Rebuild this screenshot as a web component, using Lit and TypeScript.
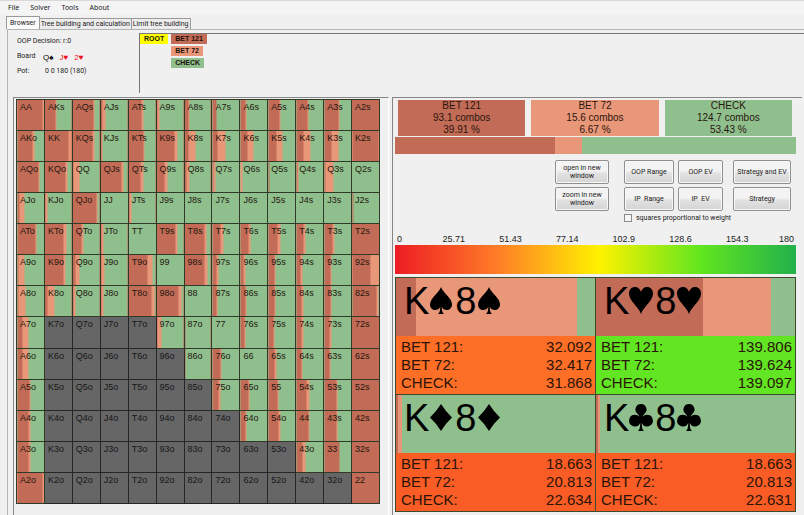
import { LitElement, html, css, svg } from "lit";
import { customElement, property, state } from "lit/decorators.js";
import { classMap } from "lit/directives/class-map.js";
import { styleMap } from "lit/directives/style-map.js";

const RANKS = "AKQJT98765432";

// One entry per hand, row by row: "a,b" gives the right edge of the BET 121
// and BET 72 bands in percent of the cell; "x" marks a hand out of range.
const STRATEGY = [
  "92,100 42,46 76,80 6,19 48,56 5,11 15,20 13,16 18,22 39,44 39,44 51,56 100,100",
  "57,64 90,100 75,83 3,8 54,61 66,76 16,43 20,50 27,50 30,53 27,51 26,53 95,100",
  "77,83 77,84 2,26 79,84 43,57 31,40 7,21 3,12 1,8 3,5 2,8 5,34 0,0",
  "8,26 2,10 88,93 0,0 3,12 0,0 0,0 0,0 0,0 0,0 0,0 0,0 5,5",
  "68,72 71,81 32,40 2,12 0,0 69,76 76,86 31,40 29,37 35,43 25,33 30,37 100,100",
  "2,27 69,79 12,26 3,14 71,90 0,0 76,87 13,21 12,17 24,27 15,23 21,26 66,100",
  "5,28 12,38 3,12 3,11 86,95 82,94 0,0 14,17 17,21 21,26 20,25 21,26 88,96",
  "20,40 x x x x 4,19 2,5 0,0 13,18 19,24 19,25 20,26 100,100",
  "17,40 x x x x x 3,4 29,33 0,0 23,28 18,24 17,23 100,100",
  "45,49 x x x x x x 21,29 30,33 33,38 38,48 43,49 100,100",
  "42,48 x x x x x x x 18,23 38,44 44,48 44,50 100,100",
  "40,48 x x x x x x x x x 23,34 55,57 100,100",
  "94,100 x x x x x x x x x x x 100,100",
].map((row) => row.split(" "));

type Suit = "spade" | "heart" | "diamond" | "club";

interface Combo {
  suit: Suit;
  bet121: number;
  bet72: number;
  tone: string;
  ev: [string, string, string];
}

const COMBOS: Combo[] = [
  { suit: "spade", bet121: 10, bet72: 91, tone: "#fd6e27", ev: ["32.092", "32.417", "31.868"] },
  { suit: "heart", bet121: 54, bet72: 88, tone: "#62e522", ev: ["139.806", "139.624", "139.097"] },
  { suit: "diamond", bet121: 1, bet72: 3, tone: "#fa5c25", ev: ["18.663", "20.813", "22.634"] },
  { suit: "club", bet121: 1, bet72: 2, tone: "#fa5c25", ev: ["18.663", "20.813", "22.631"] },
];

const SUIT_SHAPES = {
  spade: svg`<path d="M12 0C10 6 1 11 1 17.500C1 21 3.500 23 6.200 23C8.500 23 10.300 21.800 11.200 20C11.200 23.500 10.800 25.500 9 27H15C13.200 25.500 12.800 23.500 12.800 20C13.700 21.800 15.500 23 17.800 23C20.500 23 23 21 23 17.500C23 11 14 6 12 0Z"/>`,
  heart: svg`<path d="M12 27C10 20 0 14 0 6.500C0 2.600 2.600 0 6 0C9 0 11.200 2 12 5C12.800 2 15 0 18 0C21.400 0 24 2.600 24 6.500C24 14 14 20 12 27Z"/>`,
  diamond: svg`<path d="M12 0Q17 8 23 13.500Q17 19 12 27Q7 19 1 13.500Q7 8 12 0Z"/>`,
  club: svg`<path d="M12 0A5.500 5.500 0 0 1 15.800 9.500C15 10.500 14 11.500 13.500 12.800C14.800 11.500 16.300 10.800 18 10.800A5.800 5.800 0 1 1 12.800 19C12.800 23 13.200 25.500 15 27H9C10.800 25.500 11.200 23 11.200 19A5.800 5.800 0 1 1 6 10.800C7.700 10.800 9.200 11.500 10.500 12.800C10 11.500 9 10.500 8.200 9.500A5.500 5.500 0 0 1 12 0Z"/>`,
};

const bands = (a: number, b: number) => styleMap({ "--a": `${a}%`, "--b": `${b}%` });

const shared = css`
  :host {
    --bet121: #c26b56;
    --bet72: #e99779;
    --check: #8fbf8d;
  }
  * {
    box-sizing: border-box;
  }
  .bands {
    background: linear-gradient(
      to right,
      var(--bet121) var(--a),
      var(--bet72) var(--a) var(--b),
      var(--check) var(--b)
    );
  }
`;

@customElement("range-matrix")
export class RangeMatrix extends LitElement {
  static styles = [
    shared,
    css`
      :host {
        display: block;
      }
      .matrix {
        width: 100%;
        height: 405px;
        table-layout: fixed;
        border-collapse: collapse;
      }
      .hand {
        border: 1px solid #2f3a28;
        padding: 1px 0 0 3px;
        vertical-align: top;
        font-size: 9px;
        line-height: 12px;
        color: #1d2417;
      }
      .bands {
        color: #24170f;
      }
      .out {
        background: #666;
        border-color: #262626;
        color: #161616;
      }
    `,
  ];

  private name(r: number, c: number) {
    if (r === c) return RANKS[r] + RANKS[r];
    return c > r ? `${RANKS[r]}${RANKS[c]}s` : `${RANKS[c]}${RANKS[r]}o`;
  }

  private cell(code: string, r: number, c: number) {
    if (code === "x") return html`<td class="hand out">${this.name(r, c)}</td>`;
    const [a, b] = code.split(",").map(Number);
    return html`<td class="hand bands" style=${bands(a, b)}>${this.name(r, c)}</td>`;
  }

  render() {
    return html`<table class="matrix" aria-label="Starting hands">
      <tbody>
        ${STRATEGY.map((row, r) => html`<tr>${row.map((code, c) => this.cell(code, r, c))}</tr>`)}
      </tbody>
    </table>`;
  }
}

@customElement("combo-card")
export class ComboCard extends LitElement {
  @property({ attribute: false }) combo!: Combo;

  static styles = [
    shared,
    css`
      :host {
        display: block;
        border: solid #3b4a2a;
        border-width: 0 1px 1px 0;
      }
      .top {
        display: flex;
        height: 58px;
        padding: 1px 8px;
        font-size: 38px;
        line-height: 44px;
        color: #000;
      }
      .suit {
        width: 24px;
        height: 27px;
        margin: 8px 2px 0 0;
      }
      .values {
        margin: 0;
        padding: 2px 3px 2px 5px;
        background: var(--tone);
        font-size: 15px;
        line-height: 18px;
        color: #2a1408;
      }
      .line {
        display: flex;
        justify-content: space-between;
      }
      .line dd {
        margin: 0;
      }
    `,
  ];

  render() {
    const { suit, bet121, bet72, tone, ev } = this.combo;
    const icon = html`<svg class="suit" viewBox="0 0 24 27" role="img" aria-label=${suit}>
      ${SUIT_SHAPES[suit]}
    </svg>`;
    return html`
      <div class="top bands" style=${bands(bet121, bet72)}>
        <span>K</span>${icon}<span>8</span>${icon}
      </div>
      <dl class="values" style=${styleMap({ "--tone": tone })}>
        ${["BET 121:", "BET 72:", "CHECK:"].map(
          (label, i) => html`<div class="line"><dt>${label}</dt><dd>${ev[i]}</dd></div>`,
        )}
      </dl>
    `;
  }
}

@customElement("app-root")
export class AppRoot extends LitElement {
  @state() private tab = 0;

  static styles = [
    shared,
    css`
      :host {
        display: flex;
        flex-direction: column;
        min-height: 100vh;
        background: #f0f0f0;
        font-family: "Liberation Sans", Arial, sans-serif;
        color: #222;
      }
      button {
        font: inherit;
        color: inherit;
        padding: 0;
        margin: 0;
      }
      .menu {
        display: flex;
        gap: 11px;
        padding: 0 8px;
        border-top: 1px solid #d8d8d8;
        background: #f4f4f4;
        font: 7px/14px "Noto Sans", sans-serif;
      }
      .menu button {
        border: 0;
        background: none;
      }
      .small {
        font-family: Roboto, sans-serif;
        font-size: 7px;
      }
      .tabs {
        display: flex;
        align-items: flex-end;
        height: 14px;
        padding-left: 6px;
      }
      .tab {
        height: 11px;
        padding: 0 1px;
        border: 1px solid #9a9a9a;
        border-bottom: 0;
        border-left-width: 0;
        background: #ececec;
        line-height: 10px;
      }
      .tab.current {
        height: 13px;
        padding: 0 3px;
        border-left-width: 1px;
        background: #fafafa;
      }
      .page {
        flex: 1;
        display: flex;
        flex-direction: column;
        margin-left: 7px;
        border-left: 1px solid #b4b4b4;
        border-top: 1px solid #b4b4b4;
      }
      .head {
        display: flex;
        height: 67px;
        padding-top: 3px;
      }
      .info {
        display: grid;
        grid-template-columns: 26px 1fr;
        grid-auto-rows: 15px;
        flex: 0 0 131px;
        padding-left: 9px;
        margin: 1px 0 0;
        line-height: 15px;
      }
      .info dd {
        margin: 0;
      }
      .wide {
        grid-column: 1 / -1;
      }
      .pot {
        padding-left: 2px;
      }
      .board {
        display: flex;
        gap: 6px;
        font: 8px/17px "Liberation Sans", "DejaVu Sans", sans-serif;
        color: #000;
      }
      .red {
        color: #f01020;
      }
      .tree {
        flex: 1;
        display: flex;
        align-items: flex-start;
        gap: 3px;
        height: 60px;
        border: solid #777;
        border-width: 1px 0 0 1px;
        font-size: 7px;
        font-weight: bold;
      }
      .branches {
        display: flex;
        flex-direction: column;
        align-items: flex-start;
        gap: 2px;
      }
      .node {
        height: 10px;
        padding: 0 4px;
        border: 0;
        font-weight: bold;
        line-height: 10px;
        color: #1e120c;
      }
      .root {
        background: #ffff00;
      }
      .bet121 {
        background: var(--bet121);
      }
      .bet72 {
        background: var(--bet72);
      }
      .check {
        background: var(--check);
      }
      .panes {
        flex: 1;
        display: grid;
        grid-template-columns: minmax(0, 376fr) minmax(0, 410fr);
        gap: 3px;
        padding: 0 2px 0 5px;
      }
      .pane {
        border: solid #858585;
        border-width: 1px 0 0 1px;
      }
      .left {
        padding: 1px 8px 0 2px;
        border-right: 1px solid #fff;
      }
      .right {
        padding: 2px 6px 0 2px;
      }
      .actions {
        display: grid;
        grid-template-columns: repeat(3, 1fr);
        gap: 6px;
        padding: 0 4px 0 3px;
      }
      .action {
        font-size: 10px;
        line-height: 12px;
        text-align: center;
        color: #2a150e;
      }
      .share {
        height: 17px;
        margin-top: 1px;
      }
      .tools {
        display: grid;
        grid-template-columns: 54px 7px 50px 45px 2px 58px;
        grid-auto-rows: 24px;
        justify-content: end;
        gap: 3px 4px;
        padding: 6px 5px 0 0;
      }
      .tool {
        border: 1px solid #8f8f8f;
        border-radius: 2px;
        background: linear-gradient(#f3f3f3 45%, #e2e2e2 55%, #d4d4d4);
        box-shadow: inset 0 0 0 1px #f8f8f8;
        line-height: 8px;
      }
      .weight {
        grid-column: 3 / -1;
        display: flex;
        align-items: center;
        gap: 4px;
        height: 8px;
      }
      .weight input {
        appearance: none;
        width: 8px;
        height: 8px;
        margin: 0;
        border: 1px solid #8a8a8a;
        background: #f6f6f6;
      }
      .scale {
        display: grid;
        grid-template-columns: 1fr repeat(6, 2fr) 1fr;
        margin-top: -4px;
        padding: 0 2px;
        font-size: 9px;
        line-height: 11px;
        text-align: center;
      }
      .scale :first-child {
        text-align: left;
      }
      .scale :last-child {
        text-align: right;
      }
      .heat {
        height: 29px;
        background: linear-gradient(
          to right,
          #ed1c24,
          #ff7f27 26%,
          #fff200 51%,
          #62e61e 76%,
          #22b14c
        );
      }
      .combos {
        display: grid;
        grid-template-columns: 1fr 1fr;
        margin-top: 3px;
        border: solid #3b4a2a;
        border-width: 1px 0 0 1px;
      }
    `,
  ];

  private tool(label: string) {
    return html`<button class="tool small">${label}</button>`;
  }

  render() {
    return html`
      <nav class="menu">
        ${["File", "Solver", "Tools", "About"].map((m) => html`<button>${m}</button>`)}
      </nav>
      <div class="tabs" role="tablist">
        ${["Browser", "Tree building and calculation", "Limit tree building"].map(
          (t, i) => html`<button
            class=${classMap({ tab: true, small: true, current: i === this.tab })}
            role="tab"
            aria-selected=${i === this.tab}
            @click=${() => (this.tab = i)}
          >${t}</button>`,
        )}
      </div>
      <main class="page">
        <header class="head">
          <dl class="info small">
            <dt class="wide">OOP Decision: r:0</dt>
            <dt>Board</dt>
            <dd class="board">
              <span>Q♠</span><span class="red">J♥</span><span class="red">2♥</span>
            </dd>
            <dt>Pot:</dt>
            <dd class="pot">0 0 180 (180)</dd>
          </dl>
          <div class="tree">
            <button class="node root">ROOT</button>
            <div class="branches">
              <button class="node bet121">BET 121</button>
              <button class="node bet72">BET 72</button>
              <button class="node check">CHECK</button>
            </div>
          </div>
        </header>
        <div class="panes">
          <section class="pane left"><range-matrix></range-matrix></section>
          <section class="pane right">
            <div class="actions">
              <div class="action bet121">BET 121<br />93.1 combos<br />39.91 %</div>
              <div class="action bet72">BET 72<br />15.6 combos<br />6.67 %</div>
              <div class="action check">CHECK<br />124.7 combos<br />53.43 %</div>
            </div>
            <div class="share bands" style=${bands(39.91, 46.58)}></div>
            <div class="tools">
              ${this.tool("open in new window")}<span></span>${this.tool("OOP Range")}
              ${this.tool("OOP EV")}<span></span>${this.tool("Strategy and EV")}
              ${this.tool("zoom in new window")}<span></span>${this.tool("IP \u00a0Range")}
              ${this.tool("IP \u00a0EV")}<span></span>${this.tool("Strategy")}
              <label class="weight small"><input type="checkbox" />squares proportional to weight</label>
            </div>
            <div class="scale">
              ${["0", "25.71", "51.43", "77.14", "102.9", "128.6", "154.3", "180"].map(
                (v) => html`<span>${v}</span>`,
              )}
            </div>
            <div class="heat"></div>
            <div class="combos">
              ${COMBOS.map((c) => html`<combo-card .combo=${c}></combo-card>`)}
            </div>
          </section>
        </div>
      </main>
    `;
  }
}
